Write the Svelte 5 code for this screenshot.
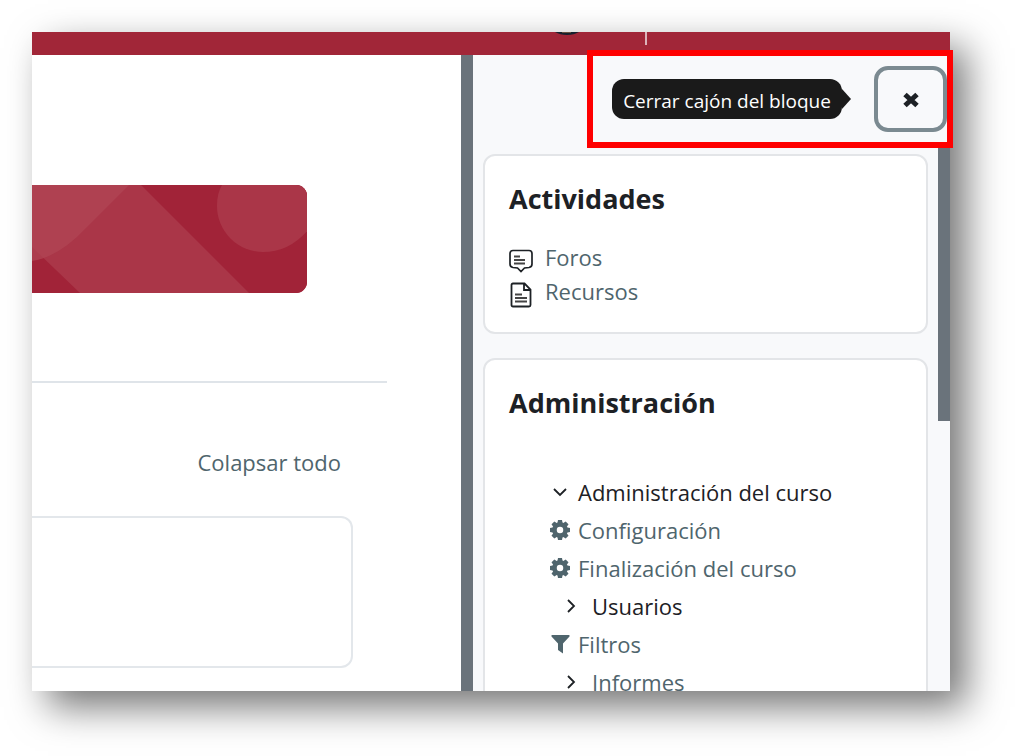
<script>
  const activities = [
    { label: 'Foros', icon: 'forum' },
    { label: 'Recursos', icon: 'file' }
  ];
  const menu = [
    { label: 'Configuración', icon: 'gear' },
    { label: 'Finalización del curso', icon: 'gear' },
    { label: 'Usuarios', icon: 'chevron', dark: true },
    { label: 'Filtros', icon: 'filter' },
    { label: 'Informes', icon: 'chevron' }
  ];
  const teeth = [0, 45, 90, 135, 180, 225, 270, 315];
</script>

<div class="page">
  <div class="window">
    <header class="navbar">
      <svg class="avatar" width="28" height="4" viewBox="0 0 28 4" aria-hidden="true">
        <path d="M2 0h24q-5 3-12 3T2 0Z" fill="#17212e" />
        <path d="M9 0h9v1H9z" fill="#66513f" />
      </svg>
      <span class="separator"></span>
    </header>

    <div class="columns">
      <main>
        <div class="banner">
          <svg width="276" height="108" viewBox="0 0 276 108" aria-hidden="true">
            <rect width="276" height="108" fill="#a12338" />
            <path d="M0 0H109L217 108H48L0 62Z" fill="#aa3648" />
            <path d="M0 0H97L55 42Q27 72 0 76Z" fill="#b04654" opacity=".75" />
            <path d="M190 0H276V45Q257 67 231 67A46 46 0 0 1 185 21Q185 8 190 0Z" fill="#aa3648" />
          </svg>
        </div>
        <hr />
        <a class="collapse" href="#contenido">Colapsar todo</a>
        <section class="topic" id="contenido" aria-label="Contenido"></section>
      </main>

      <div class="divider"></div>

      <aside>
        <div class="drawer-head">
          <div class="tooltip" role="tooltip" id="close-tip">Cerrar cajón del bloque</div>
          <button type="button" aria-labelledby="close-tip">
            <svg width="18" height="20" viewBox="0 0 18 20" aria-hidden="true">
              <path d="M3 5.500 15 16.500M15 5.500 3 16.500" stroke="#1d2125" stroke-width="5" />
            </svg>
          </button>
          <div class="marker"></div>
        </div>

        <div class="drawer-body">
          <div class="blocks">
            <section class="card">
              <h2>Actividades</h2>
              <ul class="activities">
                {#each activities as item}
                  <li>
                    {#if item.icon === 'forum'}
                      <svg width="24" height="24" viewBox="0 0 24 24" fill="none" stroke="#1d2125" stroke-width="1.7" aria-hidden="true">
                        <path d="M4 1.5H20Q23 1.5 23 4.500V15Q23 18 20 18.500L15.500 19 12 22.500 8.500 19 4 18.500Q1 18 1 15V4.500Q1 1.500 4 1.500Z" />
                        <path d="M5 7.500H11M5 11H16M5 14.500H16" stroke="#444" stroke-width="2" />
                      </svg>
                    {:else}
                      <svg width="24" height="26" viewBox="0 0 24 26" fill="none" stroke="#1d2125" stroke-width="1.8" aria-hidden="true">
                        <path d="M4 1.500H15.500L21.500 7.500V23Q21.500 24.500 20 24.500H4Q2.500 24.500 2.500 23V3Q2.500 1.500 4 1.500ZM15 2V8H21.500" />
                        <path d="M6 12.500H13M6 16H18M6 19.500H18" stroke="#444" stroke-width="1.800" />
                      </svg>
                    {/if}
                    <a href="#actividad">{item.label}</a>
                  </li>
                {/each}
              </ul>
            </section>

            <section class="card">
              <h2>Administración</h2>
              <ul class="tree">
                <li class="root">
                  <svg width="22" height="22" viewBox="0 0 22 22" aria-hidden="true">
                    <path d="m5 8 6 6 6-6" fill="none" stroke="#1d2125" stroke-width="1.800" />
                  </svg>
                  <span>Administración del curso</span>
                </li>
                {#each menu as item}
                  <li class:branch={item.icon === 'chevron'}>
                    <svg width="22" height="22" viewBox="0 0 22 22" aria-hidden="true">
                      {#if item.icon === 'gear'}
                        <g fill="#4f656d">
                          {#each teeth as angle}
                            <path d="M9 1H13L14 6H8Z" transform={`rotate(${angle} 11 11)`} />
                          {/each}
                        </g>
                        <circle cx="11" cy="11" r="5.500" fill="none" stroke="#4f656d" stroke-width="4.500" />
                      {:else if item.icon === 'filter'}
                        <path d="M3 2H20Q21 2 20.500 3.500L14 10.500V20.500L9 17V10.500L2.500 3.500Q2 2 3 2Z" fill="#4f656d" />
                      {:else}
                        <path d="m8 5 6 6-6 6" fill="none" stroke="#1d2125" stroke-width="1.800" />
                      {/if}
                    </svg>
                    {#if item.dark}
                      <span>{item.label}</span>
                    {:else}
                      <a href="#administracion">{item.label}</a>
                    {/if}
                  </li>
                {/each}
              </ul>
            </section>
          </div>
          <div class="scroll-thumb"></div>
        </div>
      </aside>
    </div>
  </div>
</div>

<style>
  :global(body) {
    margin: 0;
    background: #fff;
  }
  * {
    box-sizing: border-box;
  }
  .page {
    height: 100vh;
    padding: 32px 65px 65px 32px;
    font: 22px/34px 'Open Sans', 'Noto Sans', sans-serif;
    color: #1d2125;
    overflow: hidden;
  }
  .window {
    display: flex;
    flex-direction: column;
    height: 100%;
    background: #fff;
    box-shadow: 16px 16px 36px rgba(0, 0, 0, 0.54);
  }
  .navbar {
    display: flex;
    justify-content: flex-end;
    gap: 64px;
    flex: 0 0 23px;
    padding-right: 303px;
    background: #a12638;
  }
  .separator {
    width: 2px;
    height: 13px;
    background: #dcb3ba;
  }
  .columns {
    display: flex;
    flex: 1;
    min-height: 0;
  }
  main {
    display: flex;
    flex-direction: column;
    flex: 1;
    min-width: 0;
    padding-top: 130px;
  }
  .banner {
    height: 108px;
    margin-right: 154px;
    border-radius: 0 11px 11px 0;
    overflow: hidden;
    background: #a12338;
  }
  .banner svg {
    display: block;
  }
  hr {
    width: auto;
    height: 2px;
    margin: 88px 74px 0 0;
    border: 0;
    background: #dfe4e9;
  }
  a {
    color: #4f656d;
    text-decoration: none;
  }
  .collapse {
    align-self: flex-end;
    margin: 62px 120px 0 0;
  }
  .topic {
    height: 152px;
    margin: 37px 108px 0 0;
    border: 2px solid #e3e7eb;
    border-left: 0;
    border-radius: 0 12px 12px 0;
  }
  .divider {
    flex: 0 0 12px;
    background: #6a737b;
  }
  aside {
    display: flex;
    flex-direction: column;
    flex: 0 0 477px;
    background: #f8f9fb;
  }
  .drawer-head {
    position: relative;
    display: flex;
    justify-content: flex-end;
    align-items: center;
    gap: 32px;
    flex: 0 0 91px;
    padding: 0 3px 3px 0;
  }
  .tooltip {
    position: relative;
    width: 230px;
    height: 40px;
    border-radius: 12px;
    background: #1a1a1a;
    color: #fff;
    font-size: 19px;
    line-height: 44px;
    text-align: center;
    white-space: nowrap;
  }
  .tooltip::after {
    content: '';
    position: absolute;
    left: 100%;
    top: 10px;
    border: solid transparent;
    border-width: 10px 0 10px 9px;
    border-left-color: #1a1a1a;
  }
  button {
    display: flex;
    align-items: center;
    justify-content: center;
    width: 73px;
    height: 66px;
    padding: 0;
    border: 4px solid #7b8a91;
    border-radius: 14px;
    background: #f8f9fb;
  }
  .marker {
    position: absolute;
    inset: -5px -3px -2px 114px;
    border: 6px solid #f00;
    pointer-events: none;
  }
  .drawer-body {
    display: flex;
    flex: 1;
    min-height: 0;
  }
  .blocks {
    display: flex;
    flex-direction: column;
    gap: 24px;
    flex: 1;
    padding: 8px 10px 0 10px;
    overflow: hidden;
  }
  .scroll-thumb {
    width: 12px;
    height: 275px;
    background: #6a737b;
  }
  .card {
    flex: none;
    padding: 24px;
    border: 2px solid #e3e5e8;
    border-radius: 12px;
    background: #fff;
  }
  h2 {
    margin: 0;
    font-size: 27px;
    line-height: 38px;
    font-weight: 700;
  }
  ul {
    margin: 0;
    padding: 0;
    list-style: none;
  }
  .activities {
    padding-top: 22px;
  }
  li {
    display: flex;
    align-items: center;
  }
  .activities li {
    gap: 12px;
    line-height: 34px;
  }
  .activities svg {
    margin-top: 8px;
  }
  .tree {
    padding: 51px 0 0 40px;
  }
  .tree li {
    gap: 7px;
    height: 38px;
    white-space: nowrap;
  }
  .tree .branch {
    gap: 10px;
    padding-left: 11px;
  }
</style>
